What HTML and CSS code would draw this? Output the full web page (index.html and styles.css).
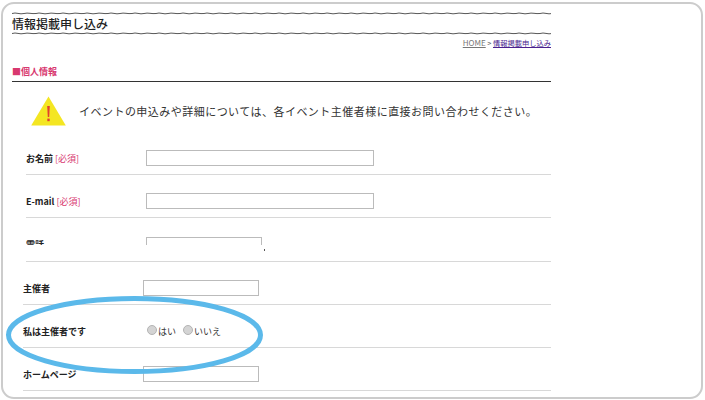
FILE: index.html
```html
<!DOCTYPE html>
<html lang="ja">
<head>
  <meta charset="UTF-8" />
  <meta name="viewport" content="width=device-width, initial-scale=1.0"/>
  <title>情報掲載申し込み</title>
  <link rel="stylesheet" href="styles.css">
</head>
<body>
  <svg class="defs" width="0" height="0" aria-hidden="true">
    <defs>
      <pattern id="wave" width="24" height="3" patternUnits="userSpaceOnUse">
        <path d="M0 1.5 Q3 0.6 6 1.4 T12 1.5 T18 1.3 T24 1.5" fill="none" stroke="#444" stroke-width="0.9"/>
      </pattern>
    </defs>
  </svg>

  <div class="frame">
    <div class="page">
      <svg class="wave" width="539" height="3"><rect width="539" height="3" fill="url(#wave)"/></svg>
      <h1>情報掲載申し込み</h1>
      <svg class="wave" width="539" height="3"><rect width="539" height="3" fill="url(#wave)"/></svg>

      <div class="crumbs"><a class="home" href="#">HOME</a> &gt; <a class="here" href="#">情報掲載申し込み</a></div>

      <h2>■個人情報</h2>

      <div class="notice">
        <svg width="35" height="30" viewBox="0 0 35 30">
          <path d="M17.5 0.5 L34.8 29.5 H0.2 Z" fill="#f4e622"/>
          <path d="M16.2 10 H18.8 L18.2 21 H16.8 Z" fill="#e2402f"/>
          <rect x="16.3" y="22.6" width="2.4" height="2.6" fill="#e2402f"/>
        </svg>
        <p>イベントの申込みや詳細については、各イベント主催者様に直接お問い合わせください。</p>
      </div>

      <div class="row row-a">
        <label>お名前 <em>[必須]</em></label>
        <input class="wide" type="text">
      </div>
      <div class="row row-a">
        <label>E-mail <em>[必須]</em></label>
        <input class="wide" type="text">
      </div>
      <div class="row row-a row-cut">
        <div class="cut">
          <label>電話</label>
          <input class="short" type="text">
        </div>
        <span class="speck"></span>
      </div>
      <div class="row row-b">
        <label>主催者</label>
        <input class="short" type="text">
      </div>
      <div class="row row-b">
        <label>私は主催者です</label>
        <div class="choices">
          <input type="radio" name="host"><span>はい</span>
          <input type="radio" name="host"><span>いいえ</span>
        </div>
      </div>
      <div class="row row-b">
        <label>ホームページ</label>
        <input class="short" type="text">
      </div>
    </div>

    <svg class="ring" width="260" height="82" viewBox="0 0 260 82">
      <ellipse cx="130.5" cy="41" rx="126" ry="36.5" fill="none" stroke="#5bb9ea" stroke-width="5"/>
    </svg>
  </div>
</body>
</html>
```

FILE: styles.css
```css
* { box-sizing: border-box; }

body {
  margin: 0;
  background: #fff;
  color: #222;
  font-family: "Noto Sans CJK JP", "Liberation Sans", sans-serif;
}

.defs { position: absolute; }

.frame {
  position: relative;
  width: 702px;
  height: 397px;
  margin: 2px 0 0 1px;
  border: 2px solid #ccc;
  border-radius: 13px;
  overflow: hidden;
}

.page {
  width: 548px;
  padding: 8px 0 0 9px;
}

.wave { display: block; }

h1 {
  margin: 0;
  height: 17px;
  font-size: 12px;
  line-height: 17px;
  font-weight: 500;
  color: #222;
}

.crumbs {
  margin-top: 1px;
  height: 14px;
  font-size: 7.25px;
  line-height: 14px;
  text-align: right;
  color: #555;
}

.crumbs a { text-decoration: underline; }
.crumbs .home { color: #777; font-size: 8px; }
.crumbs .here { color: #4b1f8f; }

h2 {
  margin: 15px 0 0;
  height: 17px;
  font-size: 9px;
  line-height: 14px;
  font-weight: 700;
  color: #d8386f;
  border-bottom: 1px solid #333;
}

.notice {
  display: flex;
  align-items: center;
  gap: 13px;
  height: 50px;
  padding: 7px 0 0 19px;
}

.notice svg { flex: none; }

.notice p {
  margin: 0;
  font-size: 11px;
  letter-spacing: 0.47px;
  color: #333;
  white-space: nowrap;
}

.row {
  display: flex;
  align-items: center;
  height: 43px;
  padding-top: 10px;
  border-bottom: 1px solid #d8d8d8;
}

.row-a { margin-left: 14px; }
.row-b { margin-left: 11px; }

.row label {
  flex: none;
  width: 120px;
  font-size: 9px;
  font-weight: 700;
  color: #222;
}

.row em {
  font-style: normal;
  font-weight: 400;
  color: #d8386f;
}

.row input[type="text"] {
  flex: none;
  height: 16px;
  margin: 0;
  border: 1px solid #bbb;
  background: #fff;
}

.wide { width: 228px; }
.short { width: 116px; }

.row-cut {
  position: relative;
  height: 44px;
  padding-top: 0;
  align-items: flex-start;
}

.cut {
  display: flex;
  align-items: flex-start;
  height: 27px;
  padding-top: 19px;
  overflow: hidden;
}

.cut label { padding-top: 1px; }

.speck {
  width: 1px;
  height: 2px;
  margin: 31px 0 0 2px;
  background: #555;
}

.choices {
  display: flex;
  align-items: center;
  padding-left: 4px;
  font-size: 9px;
  color: #333;
}

.choices input {
  appearance: none;
  width: 10px;
  height: 10px;
  margin: 0 1px 2px 0;
  border: 1px solid #b4b4b4;
  border-radius: 50%;
  background: #d4d4d4;
}

.choices span { margin-right: 7px; }

.ring {
  position: absolute;
  left: 1px;
  top: 290px;
}
```
